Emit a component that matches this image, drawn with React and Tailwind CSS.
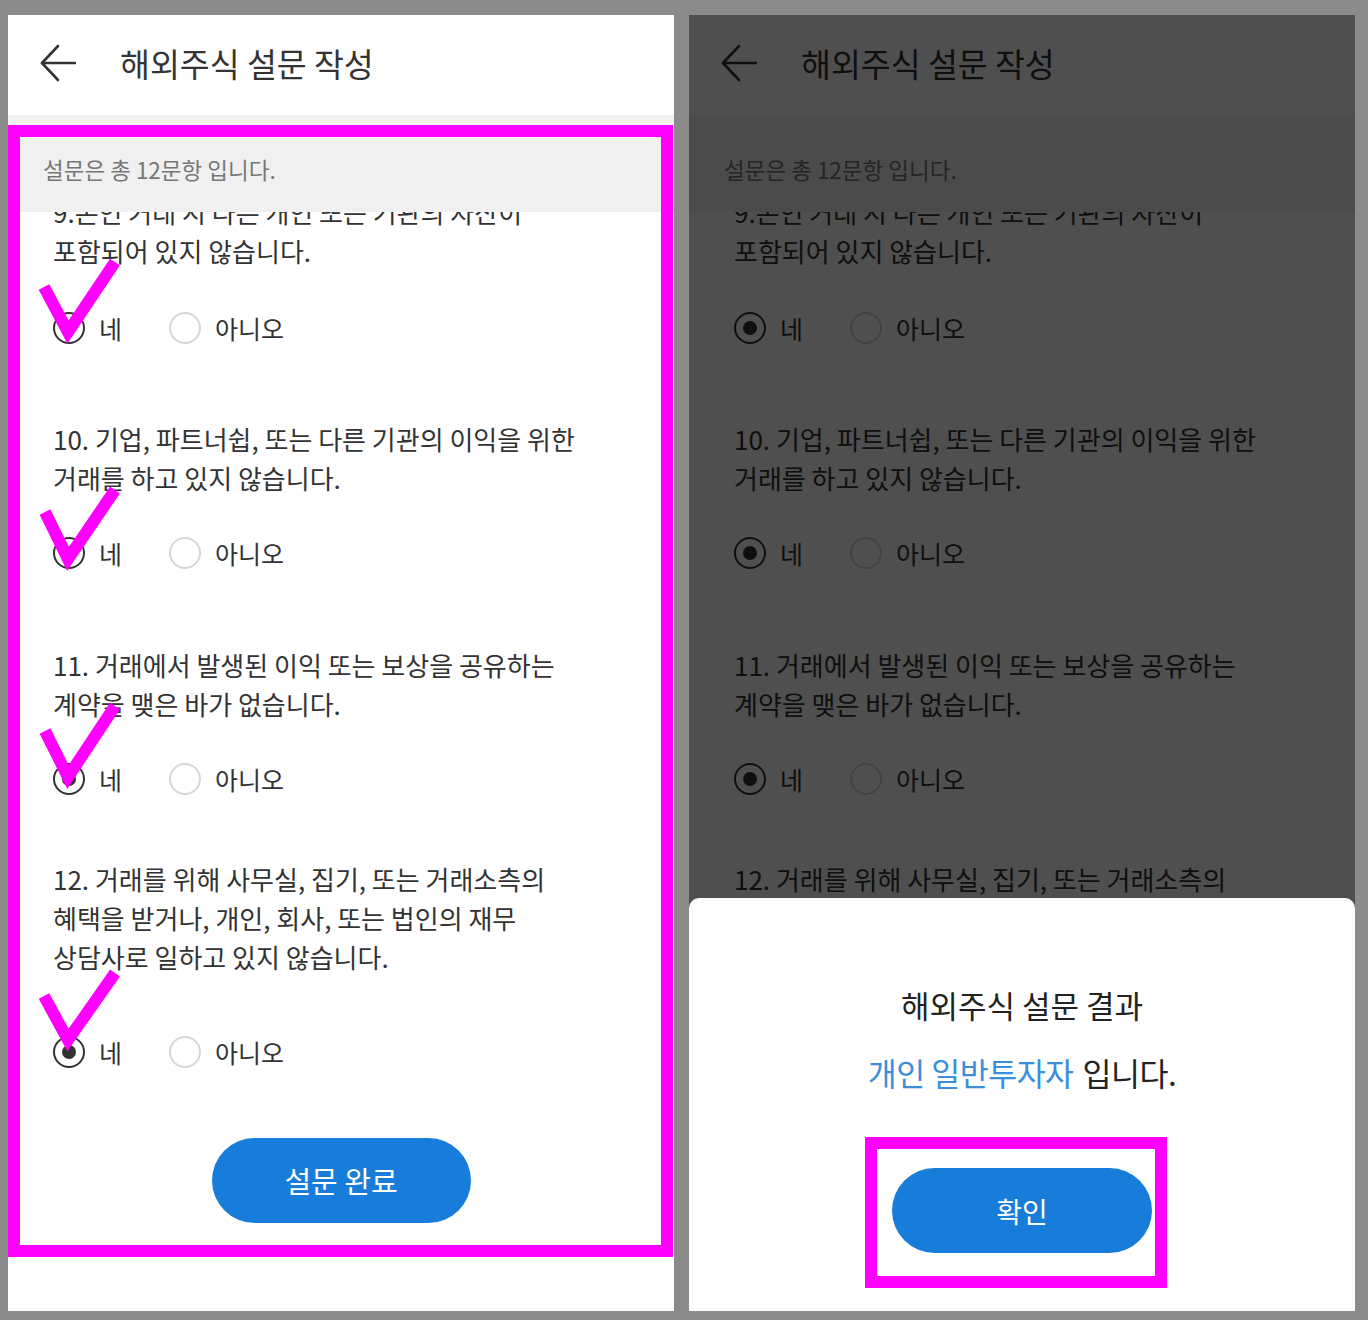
import React from 'react';

const questions = [
  { lines: ['9.본인 거래 시 다른 개인 또는 기관의 자산이', '포함되어 있지 않습니다.'], top: '-mt-[20px]', gap: 'mt-[38px]' },
  { lines: ['10. 기업, 파트너쉽, 또는 다른 기관의 이익을 위한', '거래를 하고 있지 않습니다.'], top: 'mt-[71px]', gap: 'mt-[36px]' },
  { lines: ['11. 거래에서 발생된 이익 또는 보상을 공유하는', '계약을 맺은 바가 없습니다.'], top: 'mt-[72px]', gap: 'mt-[36px]' },
  {
    lines: ['12. 거래를 위해 사무실, 집기, 또는 거래소측의', '혜택을 받거나, 개인, 회사, 또는 법인의 재무', '상담사로 일하고 있지 않습니다.'],
    top: 'mt-[60px]',
    gap: 'mt-[56px]',
  },
];

function BackArrow() {
  return (
    <svg width="36" height="38" viewBox="0 0 36 38" fill="none" stroke="#333" strokeWidth="2.6" strokeLinecap="round" strokeLinejoin="round">
      <path d="M2 19 H35" />
      <path d="M18 2 L2 19 L18 36" />
    </svg>
  );
}

function Radio({ checked, label }) {
  return (
    <div className="flex items-center">
      {checked ? (
        <span className="flex h-[32px] w-[32px] items-center justify-center rounded-full border-[2.5px] border-[#333]">
          <span className="h-[14px] w-[14px] rounded-full bg-[#333]" />
        </span>
      ) : (
        <span className="h-[32px] w-[32px] rounded-full border-2 border-[#d6d6d6]" />
      )}
      <span className="ml-[14px] text-[25px] leading-[40px] text-[#333]">{label}</span>
    </div>
  );
}

function Question({ q }) {
  return (
    <div className={q.top}>
      <p className="whitespace-nowrap text-[26px] leading-[39px] text-[#333]">
        {q.lines.map((l, i) => (
          <span key={i} className="block">{l}</span>
        ))}
      </p>
      <div className={`${q.gap} flex h-[40px] items-center`}>
        <Radio checked label="네" />
        <div className="ml-[47px]">
          <Radio label="아니오" />
        </div>
      </div>
    </div>
  );
}

function Phone({ dimmed }) {
  return (
    <div className="relative flex h-[1296px] w-[666px] flex-col overflow-hidden bg-white">
      <div className="flex h-[100px] shrink-0 items-center pb-[4px] pl-[32px]">
        <BackArrow />
        <h1 className="ml-[44px] text-[32.5px] leading-none text-[#333]">해외주식 설문 작성</h1>
      </div>
      <div className="flex h-[97px] shrink-0 items-center bg-[#f0f0f0] pl-[35px] pt-[13px]">
        <span className="text-[22.5px] text-[#777]">설문은 총 12문항 입니다.</span>
      </div>
      <div className="flex-1 overflow-hidden">
        <div className="pl-[45px]">
          {questions.map((q, i) => (
            <Question key={i} q={q} />
          ))}
          {!dimmed && (
            <div className="mt-[66px] flex justify-center pr-[45px]">
              <button className="h-[85px] w-[259px] rounded-full bg-[#187cdb] text-[29px] text-white">설문 완료</button>
            </div>
          )}
        </div>
      </div>

      {dimmed && (
        <>
          <div className="absolute inset-0 bg-black/[0.69]" />
          <div className="absolute bottom-0 left-0 right-0 flex h-[413px] flex-col items-center rounded-t-[10px] bg-white pt-[87px]">
            <p className="text-[31px] leading-[40px] text-[#222]">해외주식 설문 결과</p>
            <div className="mt-[26px] flex gap-[9px] whitespace-nowrap text-[31.5px] leading-[42px] tracking-[-0.5px]">
              <span className="text-[#3a8edb]">개인 일반투자자</span>
              <span className="text-[#222]">입니다.</span>
            </div>
            <button className="mt-[75px] h-[85px] w-[260px] rounded-full bg-[#187cdb] text-[28px] text-white">확인</button>
          </div>
        </>
      )}
    </div>
  );
}

export default function App() {
  const checks = [
    '44,287 68,332 115,262',
    '45,512 68,559 115,490',
    '45,731 68,777 115,706',
    '44,996 68,1040 115,973',
  ];

  return (
    <div
      className="relative flex h-[1320px] w-[1368px] gap-[15px] bg-[#8b8b8b] pl-[8px] pt-[15px]"
      style={{ fontFamily: '"Noto Sans CJK KR", "Noto Sans", sans-serif' }}
    >
      <Phone />
      <Phone dimmed />

      {/* annotation marks */}
      <svg className="pointer-events-none absolute inset-0" width="1368" height="1320" viewBox="0 0 1368 1320" fill="none">
        <rect x="14" y="131" width="653" height="1120" stroke="#ff00ff" strokeWidth="12" />
        <rect x="871" y="1143" width="290" height="139" stroke="#ff00ff" strokeWidth="12" />
        {checks.map((p, i) => (
          <polyline key={i} points={p} stroke="#ff00ff" strokeWidth="12" strokeLinejoin="miter" strokeLinecap="butt" />
        ))}
      </svg>
    </div>
  );
}
